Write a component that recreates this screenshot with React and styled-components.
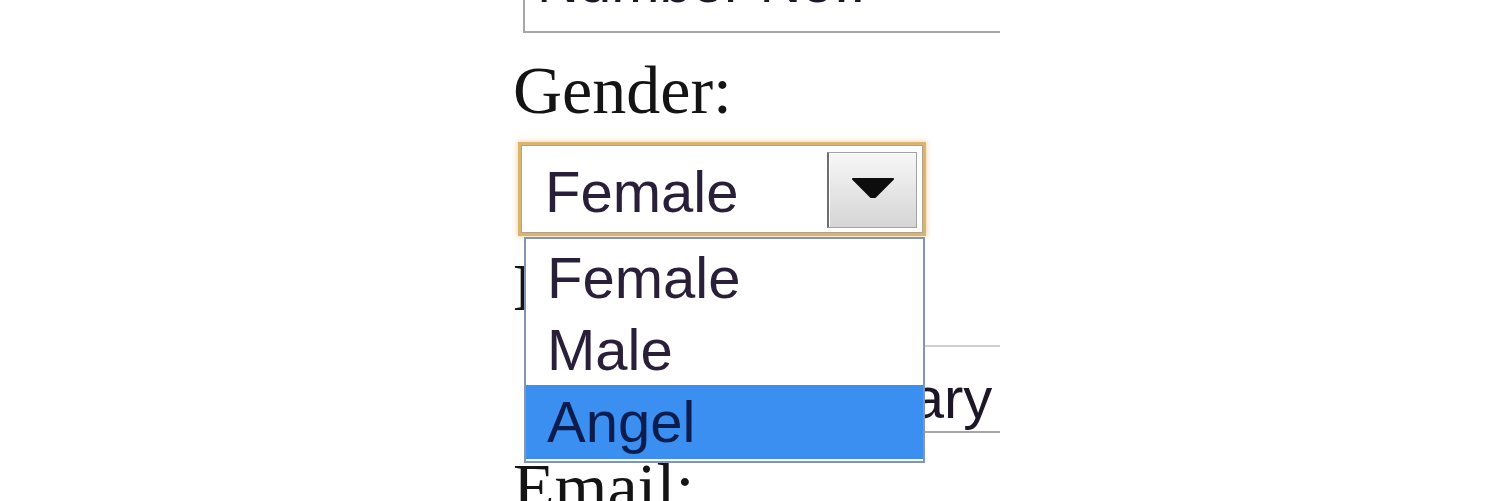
import React from 'react';
import styled, { createGlobalStyle } from 'styled-components';

const GlobalStyle = createGlobalStyle`
  body {
    margin: 0;
    background: #ffffff;
  }
`;

const Page = styled.div`
  display: flex;
  justify-content: center;
  height: 501px;
  background: #ffffff;
`;

const Frame = styled.div`
  width: 500px;
  height: 501px;
  overflow: hidden;
`;

const Form = styled.form`
  display: flex;
  flex-direction: column;
  align-items: flex-start;
  margin-top: -57px;
  padding-left: 13px;
`;

const Label = styled.label`
  display: block;
  margin-top: ${p => p.$gap}px;
  font-family: "Liberation Serif", "Times New Roman", serif;
  font-size: 68px;
  line-height: 76px;
  color: #141414;
  white-space: nowrap;
`;

const TextBox = styled.div`
  box-sizing: border-box;
  flex: none;
  display: flex;
  align-items: center;
  width: ${p => p.$width}px;
  height: ${p => p.$height}px;
  padding: ${p => p.$padTop || 0}px 12px ${p => p.$padBottom || 0}px;
  border: 2px solid #a6a6a6;
  border-top-color: #cfcfcf;
  background: #ffffff;
  font-family: "Liberation Sans", Arial, sans-serif;
  font-size: 58px;
  line-height: 58px;
  color: #1c1626;
  white-space: nowrap;
`;

const FirstBox = styled(TextBox)`
  margin-left: 10px;
`;

const DateRow = styled.div`
  display: flex;
  gap: 10px;
  margin: 20px 0 0 13px;
`;

const SelectWrap = styled.div`
  position: relative;
  margin: 14px 0 0 5px;
`;

const SelectBox = styled.div`
  box-sizing: border-box;
  display: flex;
  width: 408px;
  height: 94px;
  border: 3px solid #dcb472;
  background: #ffffff;
  box-shadow: 0 0 5px 1px rgba(242, 204, 140, 0.75), inset 0 0 0 1px #b3a488;
`;

const Value = styled.div`
  flex: 1;
  display: flex;
  align-items: center;
  padding: 6px 0 0 24px;
  font-family: "Liberation Sans", Arial, sans-serif;
  font-size: 58px;
  line-height: 58px;
  color: #2a1f38;
`;

const ArrowButton = styled.div`
  box-sizing: border-box;
  display: flex;
  align-items: center;
  justify-content: center;
  width: 90px;
  margin: 7px 6px 5px 0;
  padding-bottom: 4px;
  border: 1px solid #a3a3a3;
  border-left: 2px solid #6e6e6e;
  background: linear-gradient(#f7f7f7, #d5d5d5);
  box-shadow: inset 1px 1px 0 #ffffff;
`;

const OptionList = styled.ul`
  position: absolute;
  z-index: 2;
  top: calc(100% + 1px);
  left: 6px;
  box-sizing: border-box;
  width: 401px;
  margin: 0;
  padding: 2px 0 2px;
  list-style: none;
  border: 2px solid #8395b5;
  background: #ffffff;
`;

const Option = styled.li`
  height: ${p => (p.$active ? 74 : 72)}px;
  padding-left: 21px;
  font-family: "Liberation Sans", Arial, sans-serif;
  font-size: 58px;
  line-height: 74px;
  color: ${p => (p.$active ? '#0b1d4e' : '#2a1f38')};
  background: ${p => (p.$active ? '#3a8ff1' : 'transparent')};
`;

const Triangle = () => (
  <svg width="44" height="22" viewBox="0 0 44 22">
    <polygon
      points="2,2 42,2 24,20 20,20"
      fill="#0d0d0d"
      stroke="#0d0d0d"
      strokeWidth="2"
      strokeLinejoin="round"
    />
  </svg>
);

const options = ['Female', 'Male', 'Angel'];

const App = () => {
  return (
    <Page>
      <GlobalStyle />
      <Frame>
        <Form>
          <FirstBox $width={520} $height={90} $padBottom={12}>Number No.:</FirstBox>

          <Label $gap={19}>Gender:</Label>
          <SelectWrap>
            <SelectBox>
              <Value>Female</Value>
              <ArrowButton>
                <Triangle />
              </ArrowButton>
            </SelectBox>
            <OptionList>
              {options.map(o => (
                <Option key={o} $active={o === 'Angel'}>{o}</Option>
              ))}
            </OptionList>
          </SelectWrap>

          <Label $gap={13}>Date of Birth:</Label>
          <DateRow>
            <TextBox $width={236} $height={88} $padTop={18}>1</TextBox>
            <TextBox $width={300} $height={88} $padTop={18}>January</TextBox>
          </DateRow>

          <Label $gap={16}>Email:</Label>
        </Form>
      </Frame>
    </Page>
  );
};

export default App;
